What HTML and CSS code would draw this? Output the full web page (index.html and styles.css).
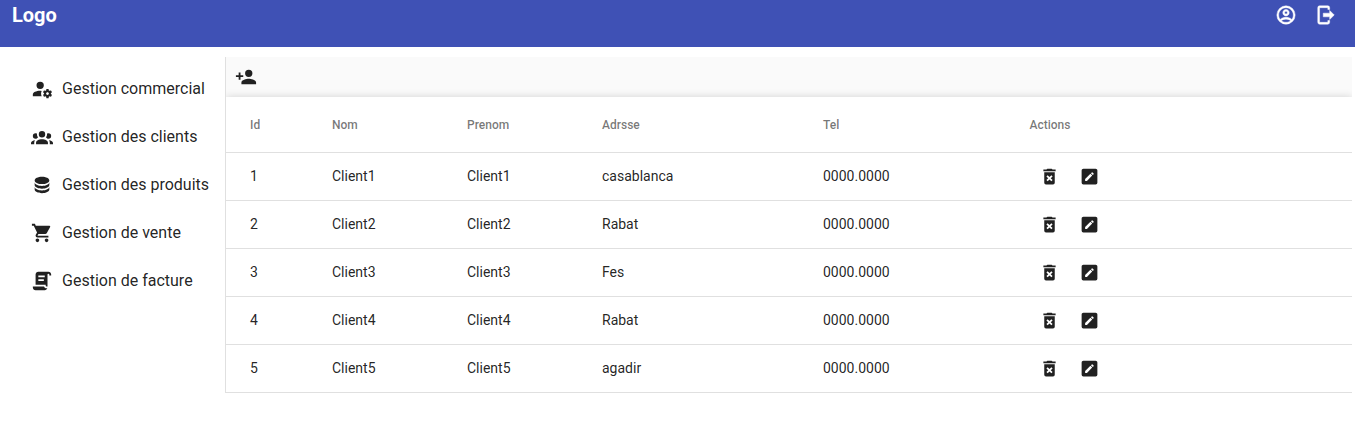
FILE: index.html
```html
<!DOCTYPE html>
<html lang="fr">
<head>
<meta charset="utf-8">
<title>Gestion des clients</title>
<link rel="stylesheet" href="styles.css">
</head>
<body>
<svg class="defs" aria-hidden="true">
  <symbol id="account" viewBox="0 0 24 24"><path d="M12,2A10,10 0 0,0 2,12A10,10 0 0,0 12,22A10,10 0 0,0 22,12A10,10 0 0,0 12,2M7.07,18.28C7.5,17.38 10.12,16.5 12,16.5C13.88,16.5 16.5,17.38 16.93,18.28C15.57,19.36 13.86,20 12,20C10.14,20 8.43,19.36 7.07,18.28M18.36,16.83C16.93,15.09 13.46,14.5 12,14.5C10.54,14.5 7.07,15.09 5.64,16.83C4.62,15.5 4,13.82 4,12C4,7.59 7.59,4 12,4C16.41,4 20,7.59 20,12C20,13.82 19.38,15.5 18.36,16.83M12,6C10.06,6 8.5,7.56 8.5,9.5C8.5,11.44 10.06,13 12,13C13.94,13 15.5,11.44 15.5,9.5C15.5,7.56 13.94,6 12,6M12,11A1.5,1.5 0 0,1 10.5,9.5A1.5,1.5 0 0,1 12,8A1.5,1.5 0 0,1 13.5,9.5A1.5,1.5 0 0,1 12,11Z"/></symbol>
  <symbol id="exit" viewBox="0 0 24 24"><path d="M5,2H14A2,2 0 0,1 16,4V6H14V4H5V20H14V18H16V20A2,2 0 0,1 14,22H5A2,2 0 0,1 3,20V4A2,2 0 0,1 5,2M16,7L21,12L16,17V14H9V10H16Z"/></symbol>
  <symbol id="account-cog" viewBox="0 0 24 24"><path d="M10 4A4 4 0 0 0 6 8A4 4 0 0 0 10 12A4 4 0 0 0 14 8A4 4 0 0 0 10 4M17 12C16.87 12 16.76 12.09 16.74 12.21L16.55 13.53C16.25 13.66 15.96 13.82 15.7 14L14.46 13.5C14.35 13.5 14.22 13.5 14.15 13.63L13.15 15.36C13.09 15.47 13.11 15.6 13.21 15.68L14.27 16.5C14.25 16.67 14.24 16.83 14.24 17C14.24 17.17 14.25 17.33 14.27 17.5L13.21 18.32C13.12 18.4 13.09 18.53 13.15 18.64L14.15 20.37C14.21 20.5 14.34 20.5 14.46 20.5L15.7 20C15.96 20.18 16.24 20.35 16.55 20.47L16.74 21.79C16.76 21.91 16.86 22 17 22H19C19.11 22 19.22 21.91 19.24 21.79L19.43 20.47C19.73 20.34 20 20.18 20.27 20L21.5 20.5C21.63 20.5 21.76 20.5 21.83 20.37L22.83 18.64C22.89 18.53 22.86 18.4 22.77 18.32L21.7 17.5C21.72 17.33 21.74 17.17 21.74 17C21.74 16.83 21.73 16.67 21.7 16.5L22.76 15.68C22.85 15.6 22.88 15.47 22.82 15.36L21.82 13.63C21.76 13.5 21.63 13.5 21.5 13.5L20.27 14C20 13.82 19.73 13.65 19.42 13.53L19.23 12.21C19.22 12.09 19.11 12 19 12H17M10 14C5.58 14 2 15.79 2 18V20H11.68A7 7 0 0 1 11 17A7 7 0 0 1 11.64 14.09C11.11 14.03 10.56 14 10 14M18 15.5C18.83 15.5 19.5 16.17 19.5 17C19.5 17.83 18.83 18.5 18 18.5C17.16 18.5 16.5 17.83 16.5 17C16.5 16.17 17.17 15.5 18 15.5Z"/></symbol>
  <symbol id="group" viewBox="0 0 24 24"><path d="M12,5.5A3.5,3.5 0 0,1 15.5,9A3.5,3.5 0 0,1 12,12.5A3.5,3.5 0 0,1 8.5,9A3.5,3.5 0 0,1 12,5.5M5,8C5.56,8 6.08,8.15 6.53,8.42C6.38,9.85 6.8,11.27 7.66,12.38C7.16,13.34 6.16,14 5,14A3,3 0 0,1 2,11A3,3 0 0,1 5,8M19,8A3,3 0 0,1 22,11A3,3 0 0,1 19,14C17.84,14 16.84,13.34 16.34,12.38C17.2,11.27 17.62,9.85 17.47,8.42C17.92,8.15 18.44,8 19,8M5.5,18.25C5.5,16.18 8.41,14.5 12,14.5C15.59,14.5 18.5,16.18 18.5,18.25V20H5.5V18.25M0,20V18.5C0,17.11 1.89,15.94 4.45,15.6C3.86,16.28 3.5,17.22 3.5,18.25V20H0M24,20H20.5V18.25C20.5,17.22 20.14,16.28 19.55,15.6C22.11,15.94 24,17.11 24,18.5V20Z"/></symbol>
  <symbol id="database" viewBox="0 0 24 24"><path d="M12,3C7.58,3 4,4.79 4,7C4,9.21 7.58,11 12,11C16.42,11 20,9.21 20,7C20,4.79 16.42,3 12,3M4,9V12C4,14.21 7.58,16 12,16C16.42,16 20,14.21 20,12V9C20,11.21 16.42,13 12,13C7.58,13 4,11.21 4,9M4,14V17C4,19.21 7.58,21 12,21C16.42,21 20,19.21 20,17V14C20,16.21 16.42,18 12,18C7.58,18 4,16.21 4,14Z"/></symbol>
  <symbol id="cart" viewBox="0 0 24 24"><path d="M17,18C15.89,18 15,18.89 15,20A2,2 0 0,0 17,22A2,2 0 0,0 19,20C19,18.89 18.1,18 17,18M1,2V4H3L6.6,11.59L5.24,14.04C5.09,14.32 5,14.65 5,15A2,2 0 0,0 7,17H19V15H7.42A0.25,0.25 0 0,1 7.17,14.75C7.17,14.7 7.18,14.66 7.2,14.63L8.1,13H15.55C16.3,13 16.96,12.58 17.3,11.97L20.88,5.5C20.95,5.34 21,5.17 21,5A1,1 0 0,0 20,4H5.21L4.27,2M7,18C5.89,18 5,18.89 5,20A2,2 0 0,0 7,22A2,2 0 0,0 9,20C9,18.89 8.1,18 7,18Z"/></symbol>
  <symbol id="invoice" viewBox="0 0 24 24"><path d="M17.8,20C17.4,21.2 16.3,22 15,22H5C3.3,22 2,20.7 2,19V18H5L14.2,18C14.6,19.2 15.7,20 17,20H17.8M19,2C20.7,2 22,3.3 22,5V6H20V5C20,4.4 19.6,4 19,4C18.4,4 18,4.4 18,5V18H17C16.4,18 16,17.6 16,17V16H5V5C5,3.3 6.3,2 8,2H19M8,6V8H15V6H8M8,10V12H14V10H8Z"/></symbol>
  <symbol id="account-plus" viewBox="0 0 24 24"><path d="M15,14C12.33,14 7,15.33 7,18V20H23V18C23,15.33 17.67,14 15,14M6,10V7H4V10H1V12H4V15H6V12H9V10M15,12A4,4 0 0,0 19,8A4,4 0 0,0 15,4A4,4 0 0,0 11,8A4,4 0 0,0 15,12Z"/></symbol>
  <symbol id="delete" viewBox="0 0 24 24"><path fill-rule="evenodd" d="M6,19A2,2 0 0,0 8,21H16A2,2 0 0,0 18,19V7H6V19M8.46,11.88L9.87,10.47L12,12.59L14.12,10.47L15.53,11.88L13.41,14L15.53,16.12L14.12,17.53L12,15.41L9.88,17.53L8.47,16.12L10.59,14L8.46,11.88M15.5,4L14.5,3H9.5L8.5,4H5V6H19V4H15.5Z"/></symbol>
  <symbol id="edit" viewBox="0 0 24 24"><path d="M19,3H5C3.89,3 3,3.89 3,5V19A2,2 0 0,0 5,21H19A2,2 0 0,0 21,19V5C21,3.89 20.1,3 19,3M16.7,9.35L15.7,10.35L13.65,8.3L14.65,7.3C14.86,7.08 15.21,7.08 15.42,7.3L16.7,8.58C16.92,8.79 16.92,9.14 16.7,9.35M7,14.94L13.06,8.88L15.12,10.94L9.06,17H7V14.94Z"/></symbol>
</svg>
<header class="topbar">
  <span class="logo">Logo</span>
  <nav class="topbar-actions">
    <svg class="icon"><use href="#account"/></svg>
    <svg class="icon"><use href="#exit"/></svg>
  </nav>
</header>
<div class="layout">
  <nav class="sidebar">
    <a class="nav-item"><svg class="icon"><use href="#account-cog"/></svg>Gestion commercial</a>
    <a class="nav-item"><svg class="icon"><use href="#group"/></svg>Gestion des clients</a>
    <a class="nav-item"><svg class="icon"><use href="#database"/></svg>Gestion des produits</a>
    <a class="nav-item"><svg class="icon"><use href="#cart"/></svg>Gestion de vente</a>
    <a class="nav-item"><svg class="icon"><use href="#invoice"/></svg>Gestion de facture</a>
  </nav>
  <main class="content">
    <div class="toolbar"><svg class="icon"><use href="#account-plus"/></svg></div>
    <div class="table">
      <div class="row head"><span>Id</span><span>Nom</span><span>Prenom</span><span>Adrsse</span><span>Tel</span><span>Actions</span></div>
      <div class="row"><span>1</span><span>Client1</span><span>Client1</span><span>casablanca</span><span>0000.0000</span><span class="actions"><svg class="icon"><use href="#delete"/></svg><svg class="icon"><use href="#edit"/></svg></span></div>
      <div class="row"><span>2</span><span>Client2</span><span>Client2</span><span>Rabat</span><span>0000.0000</span><span class="actions"><svg class="icon"><use href="#delete"/></svg><svg class="icon"><use href="#edit"/></svg></span></div>
      <div class="row"><span>3</span><span>Client3</span><span>Client3</span><span>Fes</span><span>0000.0000</span><span class="actions"><svg class="icon"><use href="#delete"/></svg><svg class="icon"><use href="#edit"/></svg></span></div>
      <div class="row"><span>4</span><span>Client4</span><span>Client4</span><span>Rabat</span><span>0000.0000</span><span class="actions"><svg class="icon"><use href="#delete"/></svg><svg class="icon"><use href="#edit"/></svg></span></div>
      <div class="row"><span>5</span><span>Client5</span><span>Client5</span><span>agadir</span><span>0000.0000</span><span class="actions"><svg class="icon"><use href="#delete"/></svg><svg class="icon"><use href="#edit"/></svg></span></div>
    </div>
  </main>
</div>
</body>
</html>
```
FILE: styles.css
```css
* { box-sizing: border-box; }
body { margin: 0; background: #fff; color: rgba(0,0,0,.87); font-family: Roboto, sans-serif; overflow: hidden; }
.defs { display: none; }
.icon { display: block; width: 22px; height: 22px; fill: currentColor; flex: none; }
.topbar { display: flex; justify-content: space-between; align-items: flex-start; height: 47px; padding: 0 18px 0 12px; background: #3f51b5; color: #fff; }
.logo { font-size: 20px; font-weight: 700; line-height: 30px; }
.topbar-actions { display: flex; gap: 18px; padding-top: 4px; }
.topbar-actions .icon { stroke: currentColor; stroke-width: .5px; }
.layout { display: flex; padding: 10px 3px 0 0; }
.sidebar { width: 225px; flex: none; padding: 7px 0 0 31px; }
.nav-item { display: flex; align-items: center; gap: 9px; height: 48px; font-size: 16px; white-space: nowrap; }
.nav-item .icon { margin-top: 2px; }
.content { flex: 1; border-left: 1px solid #e0e0e0; overflow: hidden; }
.toolbar { height: 40px; padding: 9px; background: #fafafa; }
.table { position: relative; background: #fff; box-shadow: 0 0 8px rgba(0,0,0,.16); }
.row { display: grid; grid-template-columns: 82px 135px 135px 221px 206.5px 1fr; align-items: center; height: 48px; padding: 0 0 2px 24px; border-bottom: 1px solid #e0e0e0; font-size: 14px; }
.head { height: 56px; padding-bottom: 0; color: rgba(0,0,0,.54); font-size: 12px; font-weight: 500; }
.actions { display: flex; gap: 19px; padding: 2px 0 0 9px; }
.actions .icon { width: 21px; height: 21px; }
```
